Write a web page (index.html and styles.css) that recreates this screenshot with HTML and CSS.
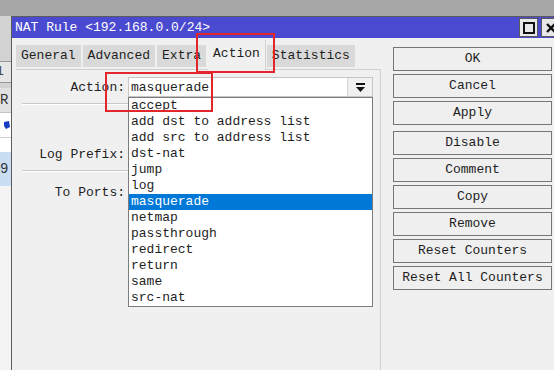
FILE: index.html
```html
<!DOCTYPE html>
<html lang="en">
<head>
    <meta charset="UTF-8">
    <title>NAT Rule</title>
    <link rel="stylesheet" href="styles.css">
</head>
<body>

<div class="screen">
    <div class="topband"></div>
    <div class="main">
        <div class="behind">
            <div class="b-top"></div>
            <div class="b-field">1</div>
            <div class="b-gap"></div>
            <div class="b-head">R</div>
            <div class="b-icon">
                <svg width="11" height="12" viewBox="0 0 11 12"><path d="M4 3 L9 2 L10 8 L6 10 L4 7 Z" fill="#1a3fc4"/></svg>
            </div>
            <div class="b-gap2"></div>
            <div class="b-sel">9</div>
            <div class="b-rest"></div>
        </div>

        <div class="window">
            <div class="titlebar">
                <span class="title">NAT Rule &lt;192.168.0.0/24&gt;</span>
                <div class="tbtn">
                    <svg width="14" height="14" viewBox="0 0 14 14"><rect x="2" y="2" width="10" height="10" fill="none" stroke="#111" stroke-width="2"/></svg>
                </div>
                <div class="tbtn">
                    <svg width="14" height="14" viewBox="0 0 14 14"><path d="M3 3 L11 11 M11 3 L3 11" stroke="#111" stroke-width="2.4"/></svg>
                </div>
            </div>

            <div class="winbody">
                <div class="pane">
                    <div class="tabs">
                        <div class="tab">General</div>
                        <div class="tab">Advanced</div>
                        <div class="tab">Extra</div>
                        <div class="tab active">Action</div>
                        <div class="tab">Statistics</div>
                    </div>
                    <div class="panel">
                        <div class="row">
                            <label class="lbl">Action:</label>
                            <div class="field combo">
                                <span class="value">masquerade</span>
                                <span class="arrow">
                                    <svg width="11" height="11" viewBox="0 0 11 11"><rect x="1" y="1" width="9" height="2" fill="#111"/><path d="M1 5 L10 5 L5.5 10 Z" fill="#111"/></svg>
                                </span>
                                <ul class="list">
                                    <li>accept</li>
                                    <li>add dst to address list</li>
                                    <li>add src to address list</li>
                                    <li>dst-nat</li>
                                    <li>jump</li>
                                    <li>log</li>
                                    <li class="selected">masquerade</li>
                                    <li>netmap</li>
                                    <li>passthrough</li>
                                    <li>redirect</li>
                                    <li>return</li>
                                    <li>same</li>
                                    <li>src-nat</li>
                                </ul>
                            </div>
                        </div>
                        <div class="sep"></div>
                        <!-- log checkbox row sits under the open list -->
                        <div class="row row-log"></div>
                        <div class="row row-prefix">
                            <label class="lbl">Log Prefix:</label>
                            <div class="field"></div>
                        </div>
                        <div class="sep sep-2"></div>
                        <div class="row row-ports">
                            <label class="lbl">To Ports:</label>
                            <div class="field"></div>
                        </div>
                    </div>
                </div>

                <div class="buttons">
                    <div class="btn">OK</div>
                    <div class="btn">Cancel</div>
                    <div class="btn">Apply</div>
                    <div class="btn btn-group">Disable</div>
                    <div class="btn">Comment</div>
                    <div class="btn">Copy</div>
                    <div class="btn">Remove</div>
                    <div class="btn">Reset Counters</div>
                    <div class="btn">Reset All Counters</div>
                </div>
            </div>
        </div>
    </div>

    <div class="mark mark-tab"></div>
    <div class="mark mark-field"></div>
</div>

</body>
</html>
```

FILE: styles.css
```css
body {
    margin: 0;
    font-family: "Liberation Mono", "DejaVu Sans Mono", monospace;
    font-size: 13px;
    color: #1e1e1e;
}
.screen {
    position: relative;
    width: 554px;
    height: 370px;
    overflow: hidden;
    background: #f0f0f0;
}
.topband {
    height: 16px;
    background: #a7a7a7;
}
.main {
    display: flex;
    height: 354px;
}

/* window behind the dialog */
.behind {
    width: 11px;
    flex-shrink: 0;
    display: flex;
    flex-direction: column;
    overflow: hidden;
    background: #f4f4f4;
}
.b-top {
    height: 45px;
    background: #d2d2d2;
}
.b-field {
    height: 20px;
    background: #e6e6e6;
    border-top: 1px solid #9a9a9a;
    border-bottom: 1px solid #9a9a9a;
    line-height: 20px;
    text-indent: -4px;
    color: #444;
}
.b-gap {
    height: 5px;
    background: #d2d2d2;
}
.b-head {
    height: 24px;
    background: #e2e2e2;
    border-bottom: 1px solid #c4c4c4;
    line-height: 24px;
    font-size: 14px;
    color: #333;
}
.b-icon {
    height: 24px;
    background: #fff;
    border-bottom: 1px solid #d0d0d0;
    display: flex;
    align-items: center;
    justify-content: flex-end;
}
.b-gap2 {
    height: 14px;
    background: #fff;
}
.b-sel {
    height: 34px;
    background: #c9ddf3;
    line-height: 34px;
    font-size: 14px;
    color: #333;
}
.b-rest {
    flex: 1;
    background: #f4f4f4;
}

/* dialog */
.window {
    width: 548px;
    flex-shrink: 0;
    display: flex;
    flex-direction: column;
    border-left: 1px solid #5c5c5c;
    border-top: 1px solid #5c5c5c;
    background: #f0f0f0;
}
.titlebar {
    height: 21px;
    background: #4a4ad0;
    display: flex;
    align-items: center;
    padding-left: 3px;
}
.title {
    flex: 1;
    color: #fff;
}
.tbtn {
    width: 17px;
    height: 17px;
    margin-left: 3px;
    background: #e8e8e8;
    border: 1px solid #5a5a5a;
    display: flex;
    align-items: center;
    justify-content: center;
}
.winbody {
    flex: 1;
    display: flex;
    gap: 12px;
    padding: 7px 0 0 4px;
}
.pane {
    width: 365px;
    display: flex;
    flex-direction: column;
}
.tabs {
    height: 24px;
    display: flex;
    align-items: flex-start;
    gap: 2px;
}
.tab {
    height: 22px;
    line-height: 22px;
    padding: 0 5px;
    background: #d9d9d9;
}
.tab.active {
    position: relative;
    z-index: 1;
    height: 30px;
    margin-top: -5px;
    line-height: 28px;
    background: #f0f0f0;
    border-right: 1px solid #d0d0d0;
    margin-right: -1px;
}
.panel {
    position: relative;
    flex: 1;
    border-top: 1px solid #d0d0d0;
    border-right: 1px solid #d0d0d0;
    padding: 7px 7px 0 0;
    display: flex;
    flex-direction: column;
}
.row {
    display: flex;
    gap: 3px;
    height: 20px;
    align-items: center;
}
.lbl {
    width: 109px;
    text-align: right;
}
.field {
    position: relative;
    width: 245px;
    height: 20px;
    box-sizing: border-box;
    background: #fff;
    border: 1px solid #c6c6c6;
}
.combo {
    display: flex;
    align-items: center;
}
.combo .value {
    flex: 1;
    padding-left: 2px;
}
.arrow {
    width: 24px;
    height: 18px;
    background: #f0f0f0;
    border-left: 1px solid #d4d4d4;
    display: flex;
    align-items: center;
    justify-content: center;
}
.sep {
    margin: 6px 0 0 6px;
    border-top: 1px solid #c8c8c8;
    border-bottom: 1px solid #fff;
}
.sep-2 {
    margin-top: 6px;
}
.row-log {
    margin-top: 8px;
}
.row-prefix {
    margin-top: 11px;
}
.row-ports {
    margin-top: 10px;
}

/* dropdown */
.list {
    position: absolute;
    z-index: 5;
    top: 19px;
    left: -1px;
    width: 245px;
    box-sizing: border-box;
    margin: 0;
    padding: 0;
    list-style: none;
    background: #fff;
    border: 1px solid #7c7c7c;
}
.list li {
    height: 16px;
    line-height: 16px;
    padding-left: 2px;
    white-space: nowrap;
}
.list li.selected {
    background: #0078d7;
    color: #fff;
}

/* right button column */
.buttons {
    width: 159px;
    padding-top: 2px;
    display: flex;
    flex-direction: column;
    gap: 3px;
}
.btn {
    height: 24px;
    box-sizing: border-box;
    line-height: 22px;
    text-align: center;
    background: #efefef;
    border: 1px solid #767676;
}
.btn-group {
    margin-top: 3px;
}

/* red annotation boxes */
.mark {
    position: absolute;
    z-index: 10;
    box-sizing: border-box;
    border: 2px solid #e3262a;
}
.mark-tab {
    left: 196px;
    top: 33px;
    width: 79px;
    height: 40px;
}
.mark-field {
    left: 105px;
    top: 72px;
    width: 108px;
    height: 40px;
}
```
